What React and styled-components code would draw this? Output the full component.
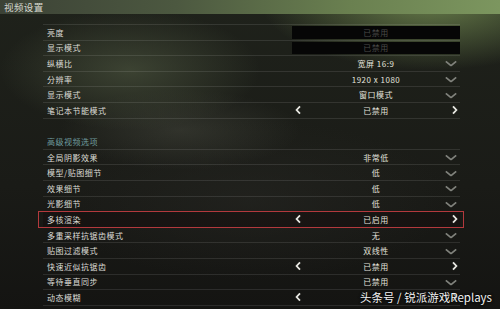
import React from "react";
import styled, { createGlobalStyle } from "styled-components";

const GlobalStyle = createGlobalStyle`
  html, body {
    margin: 0;
    padding: 0;
    width: 500px;
    height: 309px;
    overflow: hidden;
    background: #191b16;
  }
  * {
    box-sizing: border-box;
  }
`;

const Screen = styled.div`
  position: relative;
  width: 500px;
  height: 309px;
  overflow: hidden;
  display: flex;
  flex-direction: column;
  font-family: "Noto Sans CJK SC", "Noto Sans", sans-serif;
  background:
    radial-gradient(ellipse 170px 70px at 430px 0px, rgba(120, 145, 85, 0.8), transparent),
    radial-gradient(ellipse 130px 60px at 130px 70px, rgba(85, 95, 70, 0.55), transparent),
    radial-gradient(ellipse 120px 40px at 180px 130px, rgba(70, 72, 62, 0.5), transparent),
    radial-gradient(ellipse 200px 80px at 250px 200px, rgba(40, 40, 36, 0.5), transparent),
    linear-gradient(180deg, #1f221b 0%, #1a1b17 60%, #141412 100%);
`;

const TitleBar = styled.div`
  height: 14px;
  padding-left: 4px;
  display: flex;
  align-items: center;
  font-size: 9.5px;
  letter-spacing: 0.4px;
  color: #d6d8d0;
  background: linear-gradient(90deg, #3c4236 0%, #4c5840 35%, #6a8050 70%, #7c965f 100%);
`;

const List = styled.div`
  margin-top: 10px;
  margin-left: 43px;
  width: 417px;
  display: flex;
  flex-direction: column;
  border-top: 1px solid rgba(255, 255, 255, 0.1);
`;

const Row = styled.div`
  position: relative;
  height: 15.6px;
  display: grid;
  grid-template-columns: 249px 168px;
  align-items: center;
  border-bottom: ${(p) => (p.$plain ? "none" : "1px solid rgba(255, 255, 255, 0.1)")};
  background: ${(p) => (p.$selected ? "rgba(20, 10, 10, 0.45)" : "transparent")};

  &::after {
    content: "";
    display: ${(p) => (p.$selected ? "block" : "none")};
    position: absolute;
    left: -5px;
    right: -4px;
    top: -1px;
    bottom: -1px;
    border: 1.5px solid #b3393d;
    pointer-events: none;
  }
`;

const Label = styled.div`
  padding-left: 4px;
  font-size: 8px;
  letter-spacing: 0.5px;
  color: ${(p) => (p.$header ? "#6f9c9e" : "#dcdcd6")};
  white-space: nowrap;
`;

const Value = styled.div`
  position: relative;
  height: 100%;
  display: flex;
  align-items: center;
  justify-content: center;
  font-size: 8px;
  letter-spacing: 0.5px;
  color: #e2e2dc;
`;

const DisabledBox = styled.div`
  height: calc(100% - 2px);
  width: 100%;
  display: flex;
  align-items: center;
  justify-content: center;
  background: #060606;
  color: #4a4a48;
  font-size: 8px;
  letter-spacing: 0.5px;
`;

const Arrow = styled.span`
  position: absolute;
  top: 50%;
  transform: translateY(-50%);
  ${(p) => (p.$side === "left" ? "left: 3px;" : "right: 2px;")}
  display: flex;
`;

const Chevron = styled.span`
  position: absolute;
  right: 3px;
  top: 50%;
  transform: translateY(-40%);
  display: flex;
`;

const Watermark = styled.div`
  position: absolute;
  right: 8px;
  bottom: 4px;
  font-family: "Noto Sans CJK SC", "Noto Sans", sans-serif;
  font-size: 11.5px;
  color: #f2f2f2;
  text-shadow: 0 0 2px #000, 0 0 3px rgba(0, 0, 0, 0.8);
  white-space: nowrap;
`;

const LeftIcon = () => (
  <svg width="6" height="9" viewBox="0 0 6 9">
    <path d="M5 0.8 L1.6 4.5 L5 8.2" fill="none" stroke="#e6e6e0" strokeWidth="1.8" />
  </svg>
);

const RightIcon = () => (
  <svg width="6" height="9" viewBox="0 0 6 9">
    <path d="M1 0.8 L4.4 4.5 L1 8.2" fill="none" stroke="#e6e6e0" strokeWidth="1.8" />
  </svg>
);

const DownIcon = () => (
  <svg width="12" height="6" viewBox="0 0 12 6">
    <path d="M0.8 0.8 L6 5 L11.2 0.8" fill="none" stroke="#80827c" strokeWidth="1.7" />
  </svg>
);

const top = [
  { label: "亮度", value: "已禁用", kind: "disabled" },
  { label: "显示模式", value: "已禁用", kind: "disabled" },
  { label: "纵横比", value: "宽屏 16:9", kind: "drop" },
  { label: "分辨率", value: "1920 x 1080", kind: "drop" },
  { label: "显示模式", value: "窗口模式", kind: "drop" },
  { label: "笔记本节能模式", value: "已禁用", kind: "toggle" },
];

// the last value sits under the watermark in the screenshot
const advanced = [
  { label: "全局阴影效果", value: "非常低", kind: "drop" },
  { label: "模型/贴图细节", value: "低", kind: "drop" },
  { label: "效果细节", value: "低", kind: "drop" },
  { label: "光影细节", value: "低", kind: "drop" },
  { label: "多核渲染", value: "已启用", kind: "toggle", selected: true },
  { label: "多重采样抗锯齿模式", value: "无", kind: "drop" },
  { label: "贴图过滤模式", value: "双线性", kind: "drop" },
  { label: "快速近似抗锯齿", value: "已禁用", kind: "toggle" },
  { label: "等待垂直同步", value: "已禁用", kind: "drop" },
  { label: "动态模糊", value: "", kind: "toggle" },
];

const SettingRow = ({ item }) => (
  <Row $selected={item.selected}>
    <Label>{item.label}</Label>
    <Value>
      {item.kind === "disabled" ? (
        <DisabledBox>{item.value}</DisabledBox>
      ) : (
        <>
          {item.kind === "toggle" && (
            <Arrow $side="left">
              <LeftIcon />
            </Arrow>
          )}
          {item.value && <span>{item.value}</span>}
          {item.kind === "toggle" && (
            <Arrow $side="right">
              <RightIcon />
            </Arrow>
          )}
          {item.kind === "drop" && (
            <Chevron>
              <DownIcon />
            </Chevron>
          )}
        </>
      )}
    </Value>
  </Row>
);

export default function App() {
  return (
    <>
      <GlobalStyle />
      <Screen>
        <TitleBar>视频设置</TitleBar>
        <List>
          {top.map((item, i) => (
            <SettingRow key={"t" + i} item={item} />
          ))}
          <Row $plain>
            <Label />
          </Row>
          <Row>
            <Label $header>高级视频选项</Label>
          </Row>
          {advanced.map((item, i) => (
            <SettingRow key={"a" + i} item={item} />
          ))}
        </List>
        <Watermark>头条号 / 锐派游戏Replays</Watermark>
      </Screen>
    </>
  );
}
